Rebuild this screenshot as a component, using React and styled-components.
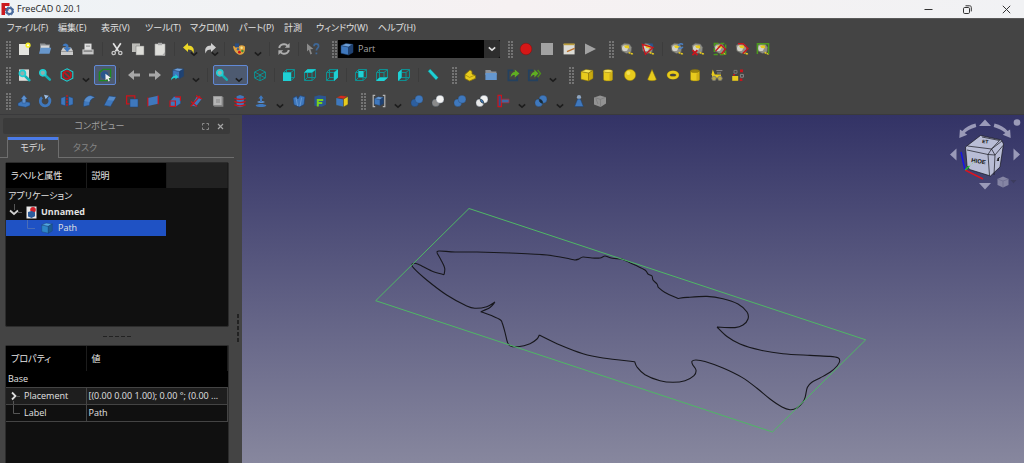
import React from "react";
import styled, { createGlobalStyle, css } from "styled-components";

const GlobalStyle = createGlobalStyle`
  * { box-sizing: border-box; }
  body {
    margin: 0;
    background: #444;
    color: #e2e2e2;
    font-family: "Open Sans", "Noto Sans CJK JP", sans-serif;
    font-size: 9px;
    line-height: 16px;
    font-feature-settings: "palt";
  }
  button, select {
    font: inherit;
    font-feature-settings: inherit;
    color: inherit;
    background: none;
    border: 0;
    padding: 0;
  }
`;

/* ---------- window frame ---------- */

const Window = styled.div`
  display: flex;
  flex-direction: column;
  min-height: 100vh;
`;

const TitleBar = styled.header`
  display: flex;
  align-items: center;
  height: 18px;
  padding-left: 1px;
  gap: 3px;
  color: #222;
  background: linear-gradient(90deg, #eef3f6, #f6f1f2 50%, #f1f2f4);
`;

const WindowTitle = styled.h1`
  flex: 1;
  margin: 0;
  font-size: 9px;
  font-weight: 400;
`;

const WindowButton = styled.button`
  display: grid;
  place-items: center;
  width: 36px;
  height: 18px;
`;

const MenuBar = styled.nav`
  display: flex;
  height: 18px;
  padding-left: 7px;
  border-top: 1px solid #5a5a5a;
`;

const MenuItem = styled.button`
  width: ${(p) => p.$width}px;
  text-align: left;
  white-space: nowrap;
`;

/* ---------- toolbars ---------- */

const ToolRow = styled.div`
  display: flex;
  align-items: center;
  gap: 8px;
  height: 26px;
  padding-left: 6px;
`;

const ToolGroup = styled.div`
  display: flex;
  align-items: center;
`;

const Grip = styled.span`
  width: 5px;
  height: 17px;
  margin-right: ${(p) => (p.$tight ? 1 : 2)}px;
  background: repeating-linear-gradient(#747474 0 2px, transparent 2px 3px);
  mask-image: linear-gradient(90deg, #000 2px, transparent 2px 3px, #000 3px);
`;

const ToolRun = styled.div`
  display: grid;
  grid-template-columns: repeat(${(p) => p.$count}, 1fr);
  width: ${(p) => Math.round(p.$count * 21.6)}px;
`;

const ToolButton = styled.button`
  position: relative;
  display: grid;
  place-items: center;
  height: 20px;
  border-radius: 2px;
  ${(p) =>
    p.$active &&
    css`
      background: #4d5a70;
      border: 1px solid #6189d6;
    `}
`;

const SplitTool = styled.button`
  display: flex;
  align-items: center;
  justify-content: space-between;
  width: 35px;
  height: 20px;
  margin: 0 1px 0 2px;
  border: 1px solid #6189d6;
  border-radius: 2px;
  background: #4d5a70;
`;

const DropButton = styled.button`
  display: grid;
  place-items: end center;
  width: 16px;
  height: 16px;
`;

const CornerArrow = styled.span`
  position: absolute;
  right: 1px;
  bottom: 2px;
  display: grid;
`;

const ToolSeparator = styled.span`
  width: 1px;
  height: 14px;
  margin: 0 3px;
  background: #3c3c3c;
`;

const WorkbenchBox = styled.label`
  display: flex;
  align-items: center;
  width: 162px;
  height: 18px;
  padding-left: 1px;
  background: #000;
`;

const WorkbenchSelect = styled.select`
  appearance: none;
  flex: 1;
  margin-left: 3px;
  color: #a5a5a5;
`;

const SelectArrow = styled.span`
  display: grid;
  place-items: center;
  width: 16px;
  height: 18px;
  background: #2d2d2d;
  border-radius: 0 2px 2px 0;
`;

/* ---------- combo view ---------- */

const Main = styled.main`
  display: flex;
  flex: 1;
  border-top: 1px solid #3a3a3c;
`;

const Dock = styled.aside`
  display: flex;
  flex-direction: column;
  width: 234px;
`;

const DockTitle = styled.div`
  display: flex;
  align-items: center;
  justify-content: flex-end;
  height: 16px;
  margin: 3px 4px 0 3px;
  padding-right: 4px;
  gap: 3px;
  color: #a0a0a0;
  background: #3a3a3a;
  border-radius: 2px;
`;

const DockName = styled.span`
  flex: 1;
  text-align: center;
`;

const DockButton = styled.button`
  display: grid;
  place-items: center;
  width: 12px;
  height: 12px;
`;

const Tabs = styled.div`
  display: flex;
  height: 24px;
  padding: 3px 0 0 7px;
  background: linear-gradient(#6e6e6e, #6e6e6e) 0 100% / 100% 1px no-repeat;
`;

const Tab = styled.button`
  width: 52px;
  height: 21px;
  color: #858585;
  ${(p) =>
    p.$selected &&
    css`
      color: #dcdcdc;
      background: #444;
      border: solid #6e6e6e;
      border-width: 0 1px;
      box-shadow: inset 0 3px #4b7be8;
    `}
`;

const TreePanel = styled.section`
  flex: 1;
  margin: 4px 5px 0;
  border: 1px solid #2c2c2c;
  border-radius: 2px;
  background: #101010;
`;

const PropertyPanel = styled(TreePanel)`
  flex: 0 0 118px;
  margin-top: 0;
  border-bottom: 0;
  border-radius: 2px 2px 0 0;
`;

const Table = styled.table`
  width: 100%;
  table-layout: fixed;
  border-collapse: collapse;
`;

const HeadCell = styled.th`
  height: 25px;
  padding: 0 5px;
  font-weight: 400;
  text-align: left;
  color: #e8e8e8;
  background: ${(p) => (p.$empty ? "#222" : "#000")};
  border-right: 1px solid #1c1c1c;
`;

const TreeRow = styled.tr`
  height: 16px;
  td:first-child {
    background: ${(p) => (p.$selected ? "#1f52c4" : "none")};
  }
`;

const TreeCell = styled.td`
  height: 16px;
  padding: 0 0 0 2px;
  font-weight: ${(p) => (p.$bold ? 700 : 400)};
  white-space: nowrap;
`;

const TreeLine = styled.div`
  display: flex;
  align-items: center;
  gap: 4px;
  height: 16px;
  padding-left: ${(p) => p.$indent || 0}px;
`;

const HorizontalSplitter = styled.div`
  display: flex;
  align-items: center;
  justify-content: center;
  height: 18px;
  gap: 2px;
`;

const VerticalSplitter = styled.div`
  display: flex;
  flex-direction: column;
  align-items: center;
  width: 8px;
  padding-top: 199px;
  gap: 2px;
`;

const Tick = styled.i`
  width: ${(p) => (p.$vertical ? 2 : 4)}px;
  height: ${(p) => (p.$vertical ? 4 : 1)}px;
  background: #222;
`;

const PropertyRow = styled.tr`
  height: 16px;
  background: ${(p) => p.$shade};
`;

const PropertyCell = styled.td`
  height: 16px;
  padding: 0 0 0 2px;
  border-bottom: 1px solid #444;
  border-right: ${(p) => (p.$divided ? "1px solid #444" : "0")};
  white-space: nowrap;
`;

/* ---------- 3D view ---------- */

const Viewport = styled.section`
  position: relative;
  flex: 1;
  min-width: 0;
  background: linear-gradient(#333366, #87879e);
`;

const Scene = styled.svg`
  display: block;
  width: 100%;
  height: auto;
`;

const NavigationCube = styled.svg`
  position: absolute;
  top: 0;
  right: 0;
  width: 76px;
  height: 80px;
`;

/* ---------- icons ---------- */

const BLUE = "#3f78bd";
const DARK = "#1f4273";
const LIGHT = "#6fa0d8";
const TEAL = "#1fd0d4";
const YEL = "#e8cb1d";
const OLIVE = "#8a7508";
const GREY = "#adadad";
const RED = "#c9141c";

const Icon = ({ children, size = 16 }) => (
  <svg width={size} height={size} viewBox="0 0 16 16" fill="none" aria-hidden="true">
    {children}
  </svg>
);

const Box = ({ front = BLUE, top = LIGHT, side = DARK, stroke = DARK }) => (
  <g stroke={stroke} strokeWidth=".5" strokeLinejoin="round">
    <path d="M2 4.5 9.5 6v8L2 12.2Z" fill={front} />
    <path d="M2 4.5 7 2.4 14 3.4 9.5 6Z" fill={top} />
    <path d="M9.5 6 14 3.4v8L9.5 14Z" fill={side} />
  </g>
);

const WireCube = ({ face }) => {
  const faces = {
    front: "M2 5.500h8v8.500H2Z",
    top: "M2 5.500 5.500 2.200h8.500L10 5.500Z",
    right: "M10 5.500l4-3.300v8.300l-4 3.500Z",
    rear: "M5.500 4h5v6h-5Z",
    bottom: "M2 14 5.500 10.500h8.500L10 14Z",
    left: "M2 5.500l3.500-3v8L2 14Z",
  };
  return (
    <Icon>
      <path d="M2.500 5.500h7.500v8H2.500ZM2.500 5.500l3-3h8L10 5.500M13.500 2.500v8l-3.500 3M5.500 2.500v8h8M5.500 10.500l-3 3" stroke="#0f9092" strokeWidth="1" />
      {face && <path d={faces[face]} fill={TEAL} />}
    </Icon>
  );
};

const Lens = ({ x = 0, y = 0 }) => (
  <g transform={`translate(${x} ${y})`}>
    <path d="m8 8 4.800 4.600" stroke="#14b0b3" strokeWidth="2.600" strokeLinecap="round" />
    <circle cx="5.800" cy="5.800" r="3" fill="#8fb0ae" stroke={TEAL} strokeWidth="1.700" />
  </g>
);

const Tape = ({ children }) => (
  <Icon>
    <path d="M2 4.500 5.500 2.200l5 .8 2.200 3.500-.6 4.500-4.600 1.600L2.800 10Z" fill="#8f8f88" stroke="#5c5c58" strokeWidth=".5" />
    <circle cx="6" cy="7.200" r="2.900" fill="#d2d2c8" />
    <path d="M5 4.800 9.600 4.200l.8 3.300-4-.6Z" fill={YEL} />
    <path d="m9.600 11.600 4.600 1.600" stroke={YEL} strokeWidth="1.600" strokeDasharray="2 .4" />
    {children}
  </Icon>
);

const Spheres = ({ a = "#2d5f9f", b = BLUE, mid }) => (
  <Icon>
    <circle cx="5.800" cy="9.800" r="3.900" fill={a} stroke="#25354b" strokeWidth=".3" />
    <circle cx="10" cy="6.200" r="4" fill={b} stroke="#25354b" strokeWidth=".3" />
    {mid && <path d="M6.200 6.200c2 0 3.600 1.600 3.500 4-2 0-3.600-1.600-3.500-4Z" fill={mid} stroke="#233" strokeWidth=".7" />}
  </Icon>
);

const Arrow = ({ flip }) => (
  <Icon>
    <path
      transform={flip ? "translate(16 0) scale(-1 1)" : undefined}
      d="M2 8 8 3v3.500h6v3H8V13Z"
      fill="#a7a7a7"
    />
  </Icon>
);

const Chevron = ({ color = "#1d1d1d" }) => (
  <svg width="10" height="6" viewBox="0 0 10 6" fill="none" aria-hidden="true">
    <path d="M1.800 1.400 5 4.200l3.200-2.800" stroke={color} strokeWidth="1.600" />
  </svg>
);

const Cylinder = ({ hollow }) => (
  <Icon>
    <path d="M3.500 4v8.400c0 2 9 2 9 0V4Z" fill={YEL} stroke={OLIVE} strokeWidth=".5" />
    <ellipse cx="8" cy="4" rx="4.500" ry="1.600" fill={hollow ? "#9a8410" : "#f6e25a"} stroke={OLIVE} strokeWidth=".5" />
    <path d="M9.500 6.500v7c2 0 3-.6 3-1.100V5.500Z" fill="#bf9f10" opacity=".6" />
  </Icon>
);

const icons = {
  new: <Icon><path d="M3 3h10v11H3Z" fill="#e4e4e0" /><circle cx="12" cy="4.2" r="2.6" fill="#f6ee2a" /><circle cx="12" cy="4.2" r="1" fill="#fff" /></Icon>,
  open: <Icon><path d="M3 2.600h5l1 1h4v6H3Z" fill="#8d8f92" /><path d="M4 4.5h8V8H4Z" fill="#d6d6d6" /><path d="M3.6 6.800H14.200l-1.700 6H2Z" fill="#6796cb" /></Icon>,
  save: <Icon><path d="M2 10 4 6.400h8L14 10v4H2Z" fill="#c9c9c9" /><path d="M2 10h12v1H2Z" fill="#999" /><path d="M3.500 4.600C5 1.800 8 1.800 9.400 4.600v2.200H12.200L8.200 11 4.400 6.800h2.500V5.400Z" fill="#3f79c0" /></Icon>,
  print: <Icon><path d="M4.5 2.6h7V9h-7Z" fill="#dedede" /><path d="M2.4 8.4h11.200v5H2.400Z" fill="#c6c6c6" /><path d="M3.6 9.6h8.800v.9H3.600Z" fill="#555" /><path d="M6 4.600h4v1H6Z" fill="#888" /></Icon>,
  cut: <Icon><path d="m4.200 2.200 5.400 8.200M11.800 2.200l-5.400 8.200" stroke="#e2e2e2" strokeWidth="1.700" /><circle cx="4.700" cy="12" r="1.700" stroke="#c6c6c6" strokeWidth="1.300" /><circle cx="11.300" cy="12" r="1.700" stroke="#c6c6c6" strokeWidth="1.300" /></Icon>,
  copy: <Icon><path d="M2 2.400h8v8.600H2Z" fill="#bcbcb8" /><path d="M6 5h8v9H6Z" fill="#ddddd8" stroke="#777" strokeWidth=".5" /></Icon>,
  paste: <Icon><path d="M3 3h10v11.400H3Z" fill="#dededa" stroke="#aaa" strokeWidth=".6" /><path d="M6 1.800h4v2.400H6Z" fill="#a9a9a9" /><path d="M10 14.400 13 11v3.400Z" fill="#aaa" /></Icon>,
  undo: <Icon><path d="M2 6.400 7 2v2.400c4.800 0 6.800 3 5.400 8-.8-3-2.400-3.800-5.400-3.800V11Z" fill="#ecd728" /></Icon>,
  redo: <Icon><path d="M14 6.400 9 2v2.400c-4.800 0-6.800 3-5.400 8 .8-3 2.400-3.800 5.400-3.800V11Z" fill="#cfcfcf" /></Icon>,
  palette: <Icon><path d="M2 5c2 1 4 1.200 6 0s4-1 6 .6c.4 4.400-1 8-4.400 8.200C6 14 2.600 10 2 5Z" fill="#e2a23e" /><path d="M4 2.400h4v4H4Z" fill="#274d85" /><circle cx="10.600" cy="6.800" r="1.200" fill="#f4e890" /><circle cx="11.400" cy="10" r="1.200" fill="#3d8f3a" /><circle cx="8.400" cy="11.200" r="1.400" fill={RED} /><circle cx="7" cy="8.200" r="1.200" fill="#3b5f92" /></Icon>,
  refresh: <Icon><path d="M3.2 7C3.6 4.400 6 3 8.400 3.200c1.400.1 2.400.7 3.200 1.600M12.800 9c-.4 2.600-2.800 4-5.200 3.800-1.400-.1-2.400-.7-3.200-1.600" stroke={GREY} strokeWidth="2" /><path d="M13.600 2v4.800H8.800ZM2.400 14V9.200h4.800Z" fill={GREY} /></Icon>,
  whats: <Icon><path d="m2 2.400 6.400 5.600-3 .2 1.600 4.600-1.600.6L3.800 8.800 2 10.400Z" fill="#8b8b8b" /><path d="M9 5.200c0-3.200 4.600-3.200 4.600 0 0 2-2.200 2-2.200 4.400M11.400 11.400v1.800" stroke="#3e6796" strokeWidth="1.700" /></Icon>,
  part: <Icon><Box /></Icon>,
  record: <Icon><circle cx="8" cy="8" r="5.800" fill="#d51717" stroke="#8c0c0c" strokeWidth=".5" /></Icon>,
  stop: <Icon><path d="M2 2h12v12H2Z" fill="#a2a2a2" /></Icon>,
  macro: <Icon><path d="M2.600 3h11v10.400h-11Z" fill="#dcdcd6" /><path d="M2.600 2.400h11v1.800h-11Z" fill="#b99c3c" /><path d="m6 10.600 7.600-3.200" stroke="#b9702b" strokeWidth="1.500" /></Icon>,
  play: <Icon><path d="M3 2.400 14 8 3 13.600Z" fill="#a2a2a2" /></Icon>,
  tape: <Tape />,
  tapeAngle: <Tape><path d="M7 2.400h5.600l1 4Z" fill="#2b568f" /><path d="M2.400 3.400 13 6.600 5.400 13.400Z" stroke={RED} strokeWidth="1.300" /></Tape>,
  tapeRefresh: <Tape><path d="M14 3.600c-2-1.600-4.400-.6-4.600 1.400M9.400 6.600c1.400 1.400 3.800.8 4.400-.8" stroke="#4a7fc2" strokeWidth="1.600" /></Tape>,
  tapeClear: <Tape><path d="m2.400 9.200 5 5M7.400 9.200l-5 5" stroke={RED} strokeWidth="1.700" /></Tape>,
  tapeAll: <Tape><path d="M2.400 2.600h11.200v11H2.400Z" stroke="#4b9a1c" strokeWidth="1.500" strokeDasharray="4 2" /><path d="m3.600 10 5.400-6 4.400 4-4 5" stroke={RED} strokeWidth="1.300" /></Tape>,
  tape3d: <Tape><path d="M4 2.800h5l5 4.600-5.200 5" stroke={RED} strokeWidth="1.400" /></Tape>,
  tapeDelta: <Tape><path d="M2.400 13V2.800h11.200V13" stroke="#4b9a1c" strokeWidth="1.500" /></Tape>,

  fit: <Icon><path d="M3 2.400h10v11.400H3Z" fill="#dcdcd8" /><Lens x={0.6} y={0.6} /></Icon>,
  fitSel: <Icon><Lens /></Icon>,
  drawStyle: <Icon><path d="M8 1.800 13.800 4.800v6.400L8 14.200 2.200 11.200V4.800Z" stroke={TEAL} strokeWidth="1.100" /><circle cx="8" cy="8" r="4" fill="#3c4444" stroke="#c0161e" strokeWidth="1.600" /><path d="m5 5.200 6 5.600" stroke="#c0161e" strokeWidth="1.700" /></Icon>,
  bbox: <Icon><path d="M2.400 5.400 6 2.400h7.600v8l-3.400 3.200H2.400Z" stroke="#1d8a22" strokeWidth="1.400" /><circle cx="7.600" cy="8" r="3.700" fill="#2a568d" /><path d="m8.400 6.800 5.400 4-2.200.4 1.200 2.600-1.200.6-1.400-2.600-1.600 1.400Z" fill="#f0f0f0" /></Icon>,
  left: <Arrow />,
  right: <Arrow flip />,
  link: <Icon><g transform="translate(2 -1) scale(.9)"><Box /></g><path d="M2 13.400c0-3 2-4.600 4.400-4.600V7l3 3-3 2.600v-1.800C4.600 10.800 3 11.600 2 13.400Z" fill={TEAL} /></Icon>,
  zoomMode: <Icon><Lens /></Icon>,
  iso: <Icon><path d="M8 2.400 13.400 5v6L8 13.800 2.600 11V5ZM2.600 5 8 7.800 13.400 5M8 7.800v6M2.600 11 8 8.200l5.400 2.800" stroke="#0f9092" strokeWidth="1" /></Icon>,
  measure: <Icon><path d="m3 4.200 2.200-2.200 8 8.600-2.200 2.400Z" fill={TEAL} stroke="#0d8486" strokeWidth=".4" /></Icon>,
  partYellow: <Icon><path d="M3 7.400 8 3l2 1.400V7l3.400 1.600v2.800L7.600 14 3 11.600Z" fill={YEL} stroke={OLIVE} strokeWidth=".8" /><path d="m3 7.800 4.600 2.600L13 8.200" stroke={OLIVE} strokeWidth=".6" /></Icon>,
  folder: <Icon><path d="M2.400 3h5l1.200 1.600h4.800V8h-11Z" fill="#8d9298" /><path d="M2.400 6h11.400v7H2.400Z" fill="#6597cf" /></Icon>,
  linkMake: <Icon><path d="M8 3.400H3.400v10h8.800v-4" stroke="#24415f" strokeWidth="1.700" /><path d="M5.600 10.400C5.800 7 7.400 5 9.800 5V2.400L14.400 6.400 9.800 10.400V8C8 8 6.600 8.600 5.600 10.400Z" fill="#5fae22" /></Icon>,
  linkGroup: <Icon><path d="M7 3.400H2.800v10h8.400v-3" stroke="#24415f" strokeWidth="1.700" /><path d="M4.600 10.400C4.800 7 6.400 5 8.400 5V2.600l4 4-4 3.800V8C7 8 5.600 8.600 4.600 10.400Z" fill="#5fae22" /><path d="m11.600 3 2.800 3.600-2.800 3.600" stroke="#4c8f1c" strokeWidth="1.500" /></Icon>,
  yBox: <Icon><Box front={YEL} top="#f7e658" side="#c9a90f" stroke={OLIVE} /></Icon>,
  yCyl: <Cylinder />,
  ySphere: <Icon><circle cx="8" cy="8" r="5.700" fill={YEL} stroke={OLIVE} strokeWidth=".5" /><circle cx="6.400" cy="6" r="2" fill="#f4e257" /></Icon>,
  yCone: <Icon><path d="M8 2.400 12.400 12.400c-1 1.800-7.800 1.800-8.800 0Z" fill={YEL} stroke={OLIVE} strokeWidth=".5" /></Icon>,
  yTorus: <Icon><ellipse cx="8" cy="8" rx="4.600" ry="2.900" stroke={OLIVE} strokeWidth="3.400" /><ellipse cx="8" cy="8" rx="4.600" ry="2.900" stroke={YEL} strokeWidth="2.600" /></Icon>,
  yTube: <Cylinder hollow />,
  prims: <Icon><path d="M3.800 2.400 6 8H2.400ZM3 7.400h9v3.400H3Z" fill={YEL} /><circle cx="5" cy="11.400" r="2.200" fill="#b8a848" stroke="#777" strokeWidth=".8" /><circle cx="11" cy="11.400" r="2.200" fill="#b8a848" stroke="#777" strokeWidth=".8" /><path d="M7.400 3.600h6M8 6h4" stroke="#8a8a8a" strokeWidth="1" /></Icon>,
  builder: <Icon><path d="M2.200 9h6v4.800h-6Z" fill={YEL} /><path d="M4 3.400h3v2.800H4Z" stroke="#777" /><path d="M10 2.600h3v2.600h-3ZM9.800 11.400h2.600V14H9.800ZM3 7h2v1.600H3Z" fill={RED} /><path d="M10.400 7.400h3v2.800h-3Z" stroke="#888" /></Icon>,

  extrude: <Icon><path d="M2 10.200 6 8l8 1.400v3L9.600 14.200 2 12.800Z" fill={BLUE} stroke={DARK} strokeWidth=".5" /><path d="M6.200 10V6H4.800L8 2l3.400 4H9.800v4Z" fill="#5f92cf" stroke={DARK} strokeWidth=".4" /></Icon>,
  revolve: <Icon><path d="M5 4.400a4.800 4.800 0 1 0 6.400.2" stroke={BLUE} strokeWidth="2.800" /><path d="m7 1.800 4.800 1L8.600 6.200Z" fill="#9dbfe6" /></Icon>,
  mirror: <Icon><path d="M2 5 6.400 3.400v9.400L2 11.400ZM14 5 9.600 3.400v9.400l4.400-1.400Z" fill={BLUE} stroke={DARK} strokeWidth=".5" /><path d="M8 2v12" stroke={RED} strokeWidth="1.300" strokeDasharray="2 1" /></Icon>,
  fillet: <Icon><path d="M2.600 13.600C2 7 5.200 3 9.600 2.600l4.400 1.600C10.200 5.400 8.400 8 8.400 12.200Z" fill={BLUE} stroke={DARK} strokeWidth=".5" /><path d="M3 8c1-3 3.400-5 6.600-5l4 1.400C10.600 5 9 6.400 8.400 9Z" fill={LIGHT} opacity=".5" /></Icon>,
  chamfer: <Icon><path d="m2 12.400 5-9.400 7 .8-5.400 9.600Z" fill={BLUE} stroke={DARK} strokeWidth=".5" /><path d="m7.400 3.400 6.400.8-2 3.600L5.400 7Z" fill={LIGHT} opacity=".5" /></Icon>,
  makeFace: <Icon><path d="M2.600 2.800h8.200v8H2.600Z" stroke={RED} strokeWidth="1.300" /><path d="M6 6h8v8H6Z" fill={BLUE} stroke={DARK} strokeWidth=".5" /></Icon>,
  ruled: <Icon><path d="m3 5 10-2.200v8L3 13Z" fill={BLUE} /><path d="M2.800 4.400v9M13.200 2.400v8.800" stroke={RED} strokeWidth="1.200" /></Icon>,
  loft: <Icon><path d="m3 8 4-4.600 6.600 1v6L9 13.600H3Z" fill={BLUE} stroke={DARK} strokeWidth=".4" /><path d="M3 8h5.400v5.400H3ZM8 3.800h5.400v4" stroke={RED} strokeWidth="1.200" /></Icon>,
  sweep: <Icon><path d="M3.600 12.600 8.600 4l5 2-5.600 7.600Z" fill={BLUE} /><path d="m8 2.600 6 3.400M3 8.400l6 5.200M2.600 13.400 12 3" stroke={RED} strokeWidth="1.300" /></Icon>,
  section: <Icon><path d="M3 3h9l1.400 1.400v9.400H4.600L3 12.400Z" fill="#858585" /><path d="M3.600 3.600h8v8.400h-8Z" fill="#b4b4b4" /><path d="M6 6h4v4H6Z" fill="#9d9d9d" /></Icon>,
  cross: <Icon><path d="M4.600 3.200 8 2l3.800 1.200v9.800L8 14.200l-3.400-1.200Z" fill={BLUE} /><path d="M2.400 5.200c3 1.600 8.200 1.600 11.200 0M2.400 8.400c3 1.600 8.200 1.600 11.200 0M2.400 11.600c3 1.600 8.200 1.600 11.200 0" stroke={RED} strokeWidth="1.300" /></Icon>,
  offset: <Icon><path d="M2.600 12.400c1.400-2 9.400-2 10.800 0-1.400 2.200-9.400 2.200-10.800 0Z" fill={BLUE} /><path d="M4.200 9c1-1.400 6.600-1.400 7.600 0-1 1.400-6.600 1.400-7.600 0Z" fill="#5f92cf" /><path d="M7 9V5.600H5.400L8 2.200l2.600 3.400H9V9Z" fill={BLUE} /></Icon>,
  thick: <Icon><path d="M2 5 5.600 3l1.200 3L9 2.600l5 1.200-1 7.800L8.400 14 3 11.800Z" fill={BLUE} stroke={DARK} strokeWidth=".6" /><path d="m5 5 1.600 8M10.600 4.600 9 13" stroke={LIGHT} strokeWidth=".8" /></Icon>,
  project: <Icon><path d="M2.400 3.400 7 2.200l7 1v8.600l-4.400 2-7.200-1Z" fill="#2b568f" /><path d="M5.800 13.600V7h5.400M5.800 10h4.400" stroke="#7bd01e" strokeWidth="2" /></Icon>,
  colors: <Icon><Box front="#3f78bd" top="#d92a1e" side={YEL} stroke="#443" /></Icon>,

  compound: <Icon><path d="M4.200 2.400H2.200v11.200h2M11.800 2.400h2v11.200h-2" stroke="#b4b4b4" strokeWidth="1.200" /><g transform="translate(2 2) scale(.75)"><Box /></g></Icon>,
  boolean: <Spheres />,
  cutBool: <Spheres a="#8a8a8a" b="#f2f2f2" />,
  union: <Spheres a={BLUE} b={BLUE} />,
  common: <Spheres a="#e8e8e8" b="#f2f2f2" mid={BLUE} />,
  join: <Icon><path d="M3 2.400h3.400v11.200H3Z" fill="#2c5288" stroke={RED} strokeWidth="1.200" /><path d="M6.600 6.200H14v3.600H6.600Z" fill="#3c6aa6" stroke="#a9303a" strokeWidth=".8" /></Icon>,
  split: <Spheres a={BLUE} b={BLUE} mid="#15263d" />,
  check: <Icon><circle cx="8" cy="4.200" r="2.100" fill="#8fa6c0" /><path d="M6.600 6h2.800l3 7.600H3.600Z" fill={BLUE} stroke={DARK} strokeWidth=".5" /></Icon>,
  defeature: <Icon><path d="M2 4.400 8 2.400l6 1.800v6.400L8.600 14 2 11.400Z" fill="#929292" /><path d="m2 4.400 6.400 2L14 4.200M8.400 6.400 8.600 14M4 6l2 5" stroke="#747474" strokeWidth=".6" /></Icon>,
};

["front", "top", "right", "rear", "bottom", "left"].forEach((f) => {
  icons[`view-${f}`] = <WireCube face={f} />;
});

/* ---------- data ---------- */

const menus = [
  ["ファイル(F)", 51], ["編集(E)", 43], ["表示(V)", 44], ["ツール(T)", 45], ["マクロ(M)", 49],
  ["パート(P)", 45], ["計測", 32], ["ウィンドウ(W)", 62], ["ヘルプ(H)", 50],
];

// Within a group, an array is a run of tools, "|" a separator and "v" a drop-down arrow.
const rowOne = [
  [["new", "open", "save", "print"], "|", ["cut", "copy", "paste"], "|", ["undo", "redo"], "|", ["palette"], "v", "|", ["refresh"], "|", ["whats"]],
  "workbench",
  [["record", "stop", "macro", "play"]],
  [["tape", "tapeAngle"], "|", ["tapeRefresh", "tapeClear", "tapeAll", "tape3d", "tapeDelta"]],
];
const rowTwo = [
  [["fit", "fitSel", "drawStyle"], "v", ["bbox"], "|", ["left", "right", "link"], "v", "|", "zoom", ["iso"], "|",
    ["view-front", "view-top", "view-right"], "|", ["view-rear", "view-bottom", "view-left"], "|", ["measure"]],
  [["partYellow", "folder", "linkMake", "linkGroup"], "v"],
  [["yBox", "yCyl", "ySphere", "yCone", "yTorus", "yTube", "prims", "builder"]],
];
const rowThree = [
  [["extrude", "revolve", "mirror", "fillet", "chamfer", "makeFace", "ruled", "loft", "sweep", "section", "cross", "offset"], "v",
    ["thick", "project", "colors"]],
  [["compound"], "v", ["boolean", "cutBool", "union", "common", "join"], "v", ["split"], "v", ["check", "defeature"]],
];

const Tool = ({ name }) => (
  <ToolButton aria-label={name} $active={name === "bbox"}>
    {icons[name]}
    {(name === "undo" || name === "redo") && <CornerArrow><Chevron /></CornerArrow>}
  </ToolButton>
);

const ToolPart = ({ part }) => {
  if (part === "|") return <ToolSeparator />;
  if (part === "v") return <DropButton aria-label="more"><Chevron /></DropButton>;
  if (part === "zoom") {
    return <SplitTool aria-label="zoom">{icons.zoomMode}<DropButton as="span"><Chevron /></DropButton></SplitTool>;
  }
  return <ToolRun $count={part.length}>{part.map((n) => <Tool key={n} name={n} />)}</ToolRun>;
};

const Workbench = () => (
  <ToolGroup>
    <Grip $tight />
    <WorkbenchBox>
      {icons.part}
      <WorkbenchSelect aria-label="workbench"><option>Part</option></WorkbenchSelect>
      <SelectArrow><Chevron color="#ddd" /></SelectArrow>
    </WorkbenchBox>
  </ToolGroup>
);

const Toolbar = ({ groups }) => (
  <ToolRow role="toolbar">
    {groups.map((g, i) =>
      g === "workbench" ? <Workbench key={i} /> : (
        <ToolGroup key={i}>
          <Grip />
          {g.map((part, j) => <ToolPart key={j} part={part} />)}
        </ToolGroup>
      )
    )}
  </ToolRow>
);

/* ---------- model drawing ---------- */

// Each run is a smooth curve; neighbouring runs meet in a corner.
const fishRuns = [
  [[437, 253], [439, 251], [455, 252], [477, 252], [510, 253], [547, 255], [570, 259], [575, 260], [579, 259], [583, 257], [592, 258], [600, 258], [605, 256], [611, 258], [622, 259]],
  [[622, 259], [635, 265], [645, 270], [648, 274], [652, 276], [653, 280], [657, 284], [658, 287]],
  [[658, 287], [665, 292.5], [678, 298.5]],
  [[678, 298.5], [687, 297.4], [707, 296.4], [723, 298.7], [738, 304], [747, 312], [748, 319], [743, 325], [735, 327.6], [717, 327]],
  [[717, 327], [727, 336.5], [740, 344], [760, 350], [783, 353.7], [810, 355.4], [830, 356.4], [838, 357.8], [839.7, 361], [837, 366], [830, 372.3], [820, 378], [811.5, 382.5], [807.3, 387.5], [805.3, 396.7], [803, 402], [797, 408], [790, 409.7], [782, 407], [770, 399], [757, 388.3], [742, 377.4], [723, 368], [705, 361.5], [696, 360], [692, 361.3], [692.7, 364.7], [696, 370], [694, 375.7], [685, 380.7], [673, 382.3], [660, 380.7], [645, 374.7], [637, 367], [634.7, 361.7]],
  [[634.7, 361.7], [603, 358], [583, 353.7], [560, 345], [539.3, 335]],
  [[539.3, 335], [537, 339], [530, 343.7], [518, 346.7], [510, 345.7], [507.3, 341.7], [505, 332.3], [502.3, 323.3], [500.5, 320], [493, 316.3], [480.7, 311.7]],
  [[480.7, 311.7], [490, 307.5], [495, 302]],
  [[495, 302], [486.7, 306.7], [475, 308.3], [466.7, 306], [446.7, 295], [426.7, 280], [413.3, 267.7], [412.7, 263.7], [418.3, 264.3], [431.7, 271], [444, 274.7]],
  [[444, 274.7], [444.7, 268.3], [441, 260], [437, 253]],
];

const curve = (pts) => {
  let d = `M${pts[0]}`;
  for (let i = 0; i < pts.length - 1; i += 1) {
    const [a, b, c, e] = [pts[i - 1] || pts[i], pts[i], pts[i + 1], pts[i + 2] || pts[i + 1]];
    d += `C${b[0] + (c[0] - a[0]) / 6} ${b[1] + (c[1] - a[1]) / 6} ${c[0] - (e[0] - b[0]) / 6} ${c[1] - (e[1] - b[1]) / 6} ${c}`;
  }
  return d;
};

const Model = () => (
  <Scene viewBox="242 115 782 348" fill="none">
    <path d={fishRuns.map(curve).join("")} stroke="#17171c" strokeWidth="1.1" />
    <path d="M469 208.5 375.7 300.7 772.5 432 865.7 339.8Z" stroke="#4fb765" strokeWidth="1" />
  </Scene>
);

const Cube = () => (
  <NavigationCube viewBox="948 115 76 80" fill="none">
    <g fill="#9a9ab8">
      <path d="m979 126 6-6.500 6 6.500ZM979 183h12l-6 6.500ZM956.500 148.500v12l-6.500-6ZM1013.500 148.500v12l6.500-6Z" />
      <circle cx="1017" cy="122.500" r="3.300" />
      <path d="M975.500 123.500c-6 1.600-10 4-13.200 7.400l-2.400-1.500-.6 8.600 8-3.200-2.600-1.800c3-2.800 6.600-4.600 11.600-6ZM994.500 123.500c6 1.600 10 4 13.200 7.400l2.400-1.500.6 8.600-8-3.200 2.600-1.800c-3-2.800-6.600-4.600-11.600-6Z" />
    </g>
    <g stroke="#15151c" strokeWidth=".7" strokeLinejoin="round">
      <path d="m965.500 147 15-11.500 21 4.500 2 4-3.500 23-9.500 9-21-6.500-2.500-4Z" fill="#b9bdd6" />
      <path d="m967 150 21 4.500 3.500-5.500 10.500-8M988 154.500l1.500 21M991.500 149l3.500 6-1 20M988 154.500l7 .5 8-9.500M982 137l17.500 3.500-8 8.500-24-3" />
    </g>
    <text x="971" y="162" transform="rotate(9 971 162)" fill="#111" fontSize="6" fontWeight="700" fontFamily="Liberation Sans, sans-serif">HIOE</text>
    <text x="982" y="143" transform="rotate(6 982 143)" fill="#111" fontSize="5" fontWeight="700" fontFamily="Liberation Sans, sans-serif">ET</text>
    <path d="m997 161 2.500-4M998 158l.5 3" stroke="#111" strokeWidth="1" />
    <path d="m965 170-4-18" stroke="#1414e6" strokeWidth="1.500" />
    <path d="m965 170 18 9" stroke="#dc1420" strokeWidth="1.500" />
    <path d="m965 170 4.500-4" stroke="#22c02e" strokeWidth="1.500" />
    <path d="m969.500 166 7-6" stroke="#7fd287" strokeWidth=".8" strokeDasharray="1.500 1.500" />
    <path d="m997.500 179 5.500-2.500 5.500 2.500v6l-5.500 2.500-5.500-2.500Z" fill="#8585a4" />
    <path d="m997.500 179 5.500 2 5.500-2M1003 181v6.500" stroke="#6a6a8c" strokeWidth=".7" />
    <path d="M1010.500 180h6l-3 3.200Z" fill="#3c3c5e" />
  </NavigationCube>
);

const Branch = () => (
  <svg width="10" height="16" fill="none" aria-hidden="true">
    <path d="M1.500 0v8.500H9" stroke="#4a6db8" />
  </svg>
);

export default function App() {
  return (
    <Window>
      <GlobalStyle />
      <TitleBar>
        <svg width="13" height="14" viewBox="0 0 13 14" aria-hidden="true">
          <path d="M.5 1h8v3h-4.500v2H7.500v2.800H4V13H.5Z" fill="#cc1a1f" />
          <circle cx="8.600" cy="9" r="3" fill="none" stroke="#47699c" strokeWidth="2" />
          <circle cx="8.600" cy="9" r="4.200" fill="none" stroke="#47699c" strokeWidth="1" strokeDasharray="1.700 1.600" />
        </svg>
        <WindowTitle>FreeCAD 0.20.1</WindowTitle>
        <WindowButton aria-label="minimize">
          <svg width="9" height="9"><path d="M.5 4.500h8" stroke="#333" /></svg>
        </WindowButton>
        <WindowButton aria-label="restore">
          <svg width="9" height="9" fill="none" stroke="#333">
            <rect x=".5" y="2.500" width="6" height="6" rx="1.200" />
            <path d="M2.500.8h4.200c1 0 1.600.6 1.600 1.600v4" />
          </svg>
        </WindowButton>
        <WindowButton aria-label="close">
          <svg width="9" height="9"><path d="m.8.8 7.400 7.400M8.200.8.8 8.200" stroke="#333" /></svg>
        </WindowButton>
      </TitleBar>
      <MenuBar>
        {menus.map(([label, width]) => <MenuItem key={label} $width={width}>{label}</MenuItem>)}
      </MenuBar>
      <Toolbar groups={rowOne} />
      <Toolbar groups={rowTwo} />
      <Toolbar groups={rowThree} />
      <Main>
        <Dock>
          <DockTitle>
            <DockName>コンボビュー</DockName>
            <DockButton aria-label="float">
              <svg width="7" height="7" fill="none" stroke="#8a8a8a"><path d="M.5 2.500v-2h2M4.500.5h2v2M6.500 4.500v2h-2M2.500 6.500h-2v-2" /></svg>
            </DockButton>
            <DockButton aria-label="close panel">
              <svg width="7" height="7" stroke="#a5a5a5"><path d="m1 1 5 5M6 1 1 6" strokeWidth="1.200" /></svg>
            </DockButton>
          </DockTitle>
          <Tabs role="tablist">
            <Tab role="tab" aria-selected="true" $selected>モデル</Tab>
            <Tab role="tab" aria-selected="false">タスク</Tab>
          </Tabs>
          <TreePanel>
            <Table>
              <colgroup><col width="80" /><col width="80" /><col /></colgroup>
              <thead>
                <tr><HeadCell>ラベルと属性</HeadCell><HeadCell>説明</HeadCell><HeadCell $empty as="td" /></tr>
              </thead>
              <tbody>
                <TreeRow><TreeCell colSpan={2}>アプリケーション</TreeCell><td /></TreeRow>
                <TreeRow>
                  <TreeCell colSpan={2} $bold>
                    <TreeLine>
                      <svg width="14" height="16" fill="none" aria-hidden="true">
                        <path d="M6.500 0v6M10 8.500h4" stroke="#555" />
                        <path d="m2 6.500 4 3.500 4-3.500" stroke="#d0d0d0" strokeWidth="1.800" />
                      </svg>
                      <svg width="11" height="13" viewBox="0 0 11 13" aria-hidden="true">
                        <path d="M.5.500h10v12H.5Z" fill="#e9e9e9" />
                        <circle cx="7" cy="3.800" r="2.800" fill="#d3202a" />
                        <path d="m2 6 3.500-1L9 6.200v4L5.500 12 2 10.500Z" fill="#2c5c9c" />
                      </svg>
                      Unnamed
                    </TreeLine>
                  </TreeCell>
                  <td />
                </TreeRow>
                <TreeRow $selected>
                  <TreeCell colSpan={2}>
                    <TreeLine $indent={18}><Branch /><Icon size={14}><Box front="#2e86c8" top="#53a8e0" side="#1c5d92" /></Icon>Path</TreeLine>
                  </TreeCell>
                  <td />
                </TreeRow>
              </tbody>
            </Table>
          </TreePanel>
          <HorizontalSplitter>{[0, 1, 2, 3, 4].map((n) => <Tick key={n} />)}</HorizontalSplitter>
          <PropertyPanel>
            <Table>
              <colgroup><col width="80" /><col /></colgroup>
              <thead>
                <tr><HeadCell>プロパティ</HeadCell><HeadCell>値</HeadCell></tr>
              </thead>
              <tbody>
                <PropertyRow $shade="#000"><PropertyCell colSpan={2}>Base</PropertyCell></PropertyRow>
                <PropertyRow $shade="#1e1e1e">
                  <PropertyCell $divided>
                    <TreeLine>
                      <svg width="12" height="16" fill="none" aria-hidden="true">
                        <path d="M9 8.500h3M5.500 13v3" stroke="#555" />
                        <path d="m4 4.500 3.500 3.500L4 11.500" stroke="#ddd" strokeWidth="1.800" />
                      </svg>
                      Placement
                    </TreeLine>
                  </PropertyCell>
                  <PropertyCell $divided>[(0.00 0.00 1.00); 0.00 °; (0.00 ...</PropertyCell>
                </PropertyRow>
                <PropertyRow $shade="#101010">
                  <PropertyCell $divided>
                    <TreeLine>
                      <svg width="12" height="16" fill="none" aria-hidden="true">
                        <path d="M5.500 0v8.500H12" stroke="#555" />
                      </svg>
                      Label
                    </TreeLine>
                  </PropertyCell>
                  <PropertyCell $divided>Path</PropertyCell>
                </PropertyRow>
              </tbody>
            </Table>
          </PropertyPanel>
        </Dock>
        <VerticalSplitter>{[0, 1, 2, 3, 4].map((n) => <Tick key={n} $vertical />)}</VerticalSplitter>
        <Viewport>
          <Model />
          <Cube />
        </Viewport>
      </Main>
    </Window>
  );
}
